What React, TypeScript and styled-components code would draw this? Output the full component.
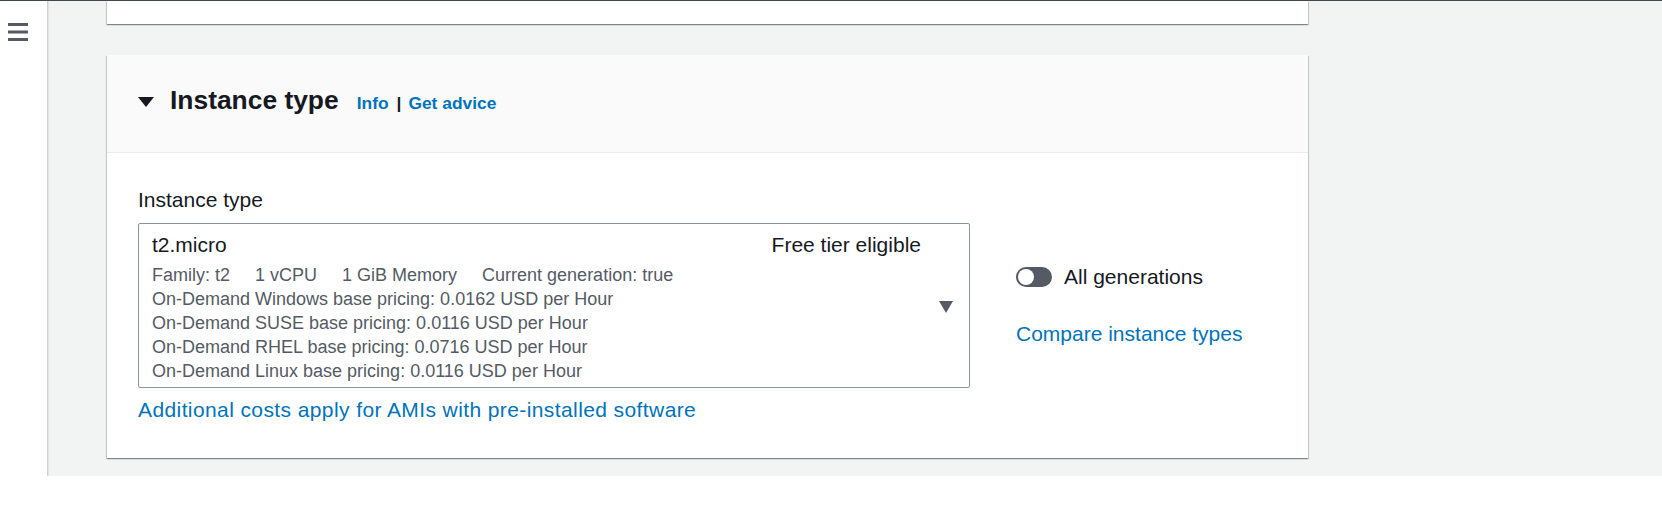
import React from "react";
import styled, { createGlobalStyle } from "styled-components";

const GlobalStyle = createGlobalStyle`
  html, body { margin: 0; padding: 0; background: #ffffff; }
  body { font-family: "Liberation Sans", Arial, sans-serif; color: #16191f; }
  * { box-sizing: border-box; }
`;

const Shell = styled.div`
  display: flex;
  height: 476px;
  border-top: 1px solid #414750;
`;

const Sidebar = styled.nav`
  width: 48px;
  flex: none;
  background: #ffffff;
  border-right: 1px solid #cfd3d4;
  box-shadow: 1px 0 1px rgba(0, 0, 0, 0.06);
  padding: 22px 0 0 8px;
  position: relative;
  z-index: 1;
`;

const Main = styled.main`
  flex: 1;
  background: #f2f3f3;
  padding-left: 59px;
  display: flex;
  flex-direction: column;
  gap: 31px;
`;

const Card = styled.section<{ $height?: number }>`
  width: 1201px;
  background: #ffffff;
  box-shadow: 0 1px 1px 0 rgba(0, 28, 36, 0.3), 1px 1px 1px 0 rgba(0, 28, 36, 0.15),
    -1px 1px 1px 0 rgba(0, 28, 36, 0.15);
  ${(p) => (p.$height ? `height: ${p.$height}px;` : "")}
`;

const Header = styled.header`
  display: flex;
  align-items: baseline;
  background: #fafafa;
  border-bottom: 1px solid #eaeded;
  padding: 27px 30px 34px 31px;
`;

const Expander = styled.svg`
  align-self: center;
  margin-top: 4px;
  flex: none;
`;

const Title = styled.h2`
  margin: 0 0 0 16px;
  font-size: 26.4px;
  line-height: 36px;
  font-weight: 700;
  color: #16191f;
`;

const HeaderLinks = styled.div`
  margin-left: 18px;
  font-size: 17.4px;
  font-weight: 700;
  display: flex;
  align-items: baseline;
`;

const HeaderLink = styled.a`
  color: #0073bb;
  text-decoration: none;
`;

const Divider = styled.span`
  color: #16191f;
  margin: 0 7px 0 8px;
`;

const Body = styled.div`
  padding: 32px 31px 33px;
`;

const Label = styled.div`
  font-size: 21px;
  line-height: 30px;
  margin-bottom: 8px;
  color: #16191f;
`;

const FieldRow = styled.div`
  display: flex;
  align-items: center;
  gap: 46px;
`;

const Select = styled.div`
  width: 832px;
  height: 165px;
  border: 1px solid #879596;
  border-radius: 2px;
  padding: 6px 16px 4px 13px;
  display: flex;
  gap: 18px;
`;

const OptionBody = styled.div`
  flex: 1;
  display: flex;
  flex-direction: column;
`;

const OptionHead = styled.div`
  display: flex;
  justify-content: space-between;
  align-items: baseline;
  font-size: 21px;
  line-height: 30px;
  color: #16191f;
`;

const Description = styled.div`
  margin-top: 3px;
  font-size: 18px;
  line-height: 24px;
  color: #545b64;
`;

const Tags = styled.div`
  display: flex;
  gap: 25px;
`;

const SelectCaret = styled.svg`
  align-self: center;
  flex: none;
`;

const SideColumn = styled.div`
  display: flex;
  flex-direction: column;
  gap: 27px;
`;

const ToggleRow = styled.label`
  display: flex;
  align-items: center;
  gap: 12px;
  font-size: 21px;
  line-height: 30px;
  color: #16191f;
`;

const Track = styled.span<{ $on?: boolean }>`
  width: 36px;
  height: 20px;
  border-radius: 10px;
  background: ${(p) => (p.$on ? "#0073bb" : "#545b64")};
  display: flex;
  align-items: center;
  padding: 0 2px;
  justify-content: ${(p) => (p.$on ? "flex-end" : "flex-start")};
`;

const Knob = styled.span`
  width: 16px;
  height: 16px;
  border-radius: 50%;
  background: #ffffff;
`;

const BodyLink = styled.a<{ $gap?: number; $spread?: number }>`
  display: block;
  font-size: 21px;
  line-height: 30px;
  color: #0073bb;
  text-decoration: none;
  ${(p) => (p.$gap ? `margin-top: ${p.$gap}px;` : "")}
  ${(p) => (p.$spread ? `letter-spacing: ${p.$spread}px;` : "")}
`;

const Hamburger = () => (
  <svg width="20" height="18" viewBox="0 0 20 18">
    <rect x="0" y="0" width="20" height="3" fill="#545b64" />
    <rect x="0" y="7.5" width="20" height="3" fill="#545b64" />
    <rect x="0" y="15" width="20" height="3" fill="#545b64" />
  </svg>
);

const pricing = [
  "On-Demand Windows base pricing: 0.0162 USD per Hour",
  "On-Demand SUSE base pricing: 0.0116 USD per Hour",
  "On-Demand RHEL base pricing: 0.0716 USD per Hour",
  "On-Demand Linux base pricing: 0.0116 USD per Hour",
];

export default function App() {
  return (
    <>
      <GlobalStyle />
      <Shell>
        <Sidebar>
          <Hamburger />
        </Sidebar>
        <Main>
          <Card $height={23} />
          <Card>
            <Header>
              <Expander width="16" height="10" viewBox="0 0 16 10">
                <polygon points="0,0 16,0 8,10" fill="#16191f" />
              </Expander>
              <Title>Instance type</Title>
              <HeaderLinks>
                <HeaderLink>Info</HeaderLink>
                <Divider>|</Divider>
                <HeaderLink>Get advice</HeaderLink>
              </HeaderLinks>
            </Header>
            <Body>
              <Label>Instance type</Label>
              <FieldRow>
                <Select>
                  <OptionBody>
                    <OptionHead>
                      <span>t2.micro</span>
                      <span>Free tier eligible</span>
                    </OptionHead>
                    <Description>
                      <Tags>
                        <span>Family: t2</span>
                        <span>1 vCPU</span>
                        <span>1 GiB Memory</span>
                        <span>Current generation: true</span>
                      </Tags>
                      {pricing.map((line) => (
                        <div key={line}>{line}</div>
                      ))}
                    </Description>
                  </OptionBody>
                  <SelectCaret width="14" height="12" viewBox="0 0 14 12">
                    <polygon points="0,0 14,0 7,12" fill="#545b64" />
                  </SelectCaret>
                </Select>
                <SideColumn>
                  <ToggleRow>
                    <Track>
                      <Knob />
                    </Track>
                    All generations
                  </ToggleRow>
                  <BodyLink>Compare instance types</BodyLink>
                </SideColumn>
              </FieldRow>
              <BodyLink $gap={7} $spread={0.4}>
                Additional costs apply for AMIs with pre-installed software
              </BodyLink>
            </Body>
          </Card>
        </Main>
      </Shell>
    </>
  );
}
